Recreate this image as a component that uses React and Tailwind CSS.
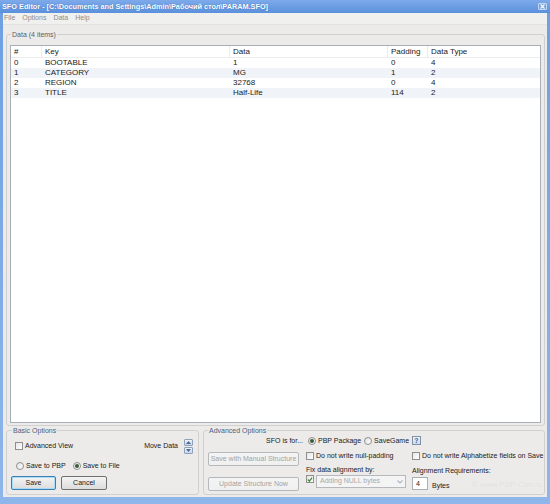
import React from 'react';

const rows = [
  { n: '0', key: 'BOOTABLE', data: '1', pad: '0', type: '4' },
  { n: '1', key: 'CATEGORY', data: 'MG', pad: '1', type: '2' },
  { n: '2', key: 'REGION', data: '32768', pad: '0', type: '4' },
  { n: '3', key: 'TITLE', data: 'Half-Life', pad: '114', type: '2' },
];

function CheckBox({ checked, label }) {
  return (
    <div className="flex items-center gap-[2px] h-[8px]">
      <span className="w-[8px] h-[8px] border border-[#8e8f8f] bg-gradient-to-br from-[#e6e6e6] to-white flex items-center justify-center">
        {checked && (
          <svg width="7" height="7" viewBox="0 0 7 7">
            <polyline points="1,3.5 2.8,5.5 6,1.2" fill="none" stroke="#3c8c2c" strokeWidth="1.4" />
          </svg>
        )}
      </span>
      {label && <span className="leading-[8px] whitespace-nowrap">{label}</span>}
    </div>
  );
}

function Radio({ checked, label }) {
  return (
    <div className="flex items-center gap-[2px]">
      <span className="w-[8px] h-[8px] rounded-full border border-[#8e8f8f] bg-gradient-to-br from-[#e2e2e2] to-white flex items-center justify-center">
        {checked && <span className="w-[4px] h-[4px] rounded-full bg-[#3b5a3b]" />}
      </span>
      <span className="leading-[8px] whitespace-nowrap">{label}</span>
    </div>
  );
}

function Button({ children, w, def, disabled }) {
  return (
    <div
      className={
        'h-[14px] rounded-[2px] border flex items-center justify-center bg-gradient-to-b from-[#f4f4f4] to-[#dcdcdc] whitespace-nowrap ' +
        (disabled
          ? 'border-[#b5b9bc] text-[#a3a3a3] from-[#f3f3f3] to-[#f0f0f0]'
          : def
          ? 'border-[#3c7fb1] shadow-[inset_0_0_0_1px_#a8dcf7]'
          : 'border-[#707070]')
      }
      style={{ width: w }}
    >
      {children}
    </div>
  );
}

export default function App() {
  return (
    <div className="w-[550px] h-[504px] flex flex-col bg-gradient-to-b from-[#6d9fe2] to-[#8fb6ea] font-['Liberation_Sans',Arial,sans-serif] text-[#1a1a1a] overflow-hidden">
      {/* title bar */}
      <div className="h-[13px] flex items-center pl-[2px] pr-[3px] bg-gradient-to-b from-[#7eaaea] to-[#5a90dc]">
        <span className="text-[7.3px] font-bold text-white leading-[13px] whitespace-nowrap [text-shadow:0_0_1px_#2b5da8]">
          {'SFO Editor - [C:\\Documents and Settings\\Admin\\Рабочий стол\\PARAM.SFO]'}
        </span>
        <span className="ml-auto w-[9px] h-[7px] rounded-[1px] border border-[#c5d9f3] bg-[#6f9fe0] flex items-center justify-center">
          <svg width="5" height="5" viewBox="0 0 5 5">
            <path d="M0.5 0.5 L4.5 4.5 M4.5 0.5 L0.5 4.5" stroke="white" strokeWidth="1.1" />
          </svg>
        </span>
      </div>

      <div className="flex-1 mx-[3px] mb-[7px] bg-[#ecebea] flex flex-col">
        {/* menu */}
        <div className="h-[12px] flex items-center gap-[7px] px-[1px] text-[7px] text-[#8d8d8d] bg-[#f0f0ef] border-b border-[#e2e2e2]">
          <span>File</span>
          <span>Options</span>
          <span>Data</span>
          <span>Help</span>
        </div>

        <div className="flex-1 flex flex-col pl-[3px] pr-[2px]">
          {/* data group */}
          <fieldset className="mt-[5px] flex-1 flex flex-col border border-[#d0d0d0] rounded-[3px] px-[3px] pb-[2px]">
            <legend className="ml-[1px] px-[1px] text-[7px] leading-[9px] text-[#5a5f68]">Data (4 items)</legend>
            <div className="mt-[6px] flex-1 bg-white border border-[#a9afb6] text-[8px]">
              <div className="grid grid-cols-[31px_188px_158px_40px_1fr] h-[12px] border-b border-[#ececec]">
                {['#', 'Key', 'Data', 'Padding', 'Data Type'].map((h, i) => (
                  <div key={h} className={'pl-[3px] leading-[12px] ' + (i < 4 ? 'border-r border-[#ececec]' : '')}>
                    {h}
                  </div>
                ))}
              </div>
              {rows.map((r, i) => (
                <div
                  key={r.n}
                  className={'grid grid-cols-[31px_188px_158px_40px_1fr] h-[10px] leading-[10px] ' + (i % 2 ? 'bg-[#f0f3f8]' : '')}
                >
                  <div className="pl-[3px]">{r.n}</div>
                  <div className="pl-[3px]">{r.key}</div>
                  <div className="pl-[3px]">{r.data}</div>
                  <div className="pl-[3px]">{r.pad}</div>
                  <div className="pl-[3px]">{r.type}</div>
                </div>
              ))}
            </div>
          </fieldset>

          {/* options */}
          <div className="h-[71px] flex gap-[4px] pb-[2px] text-[7px]">
            <fieldset className="w-[193px] border border-[#d0d0d0] rounded-[3px] pl-[4px] flex flex-col">
              <legend className="ml-[1px] px-[1px] leading-[9px] text-[#4e5d7a]">Basic Options</legend>
              <div className="mt-[3px] h-[16px] flex items-center pl-[4px] pr-[5px]">
                <CheckBox label="Advanced View" />
                <span className="ml-auto mr-[6px]">Move Data</span>
                <div className="flex flex-col gap-[1px]">
                  {[0, 1].map((k) => (
                    <span
                      key={k}
                      className="w-[9px] h-[7px] rounded-[1px] border border-[#8ea2bc] bg-gradient-to-b from-[#eef4fb] to-[#c6d6ea] flex items-center justify-center"
                    >
                      <svg width="5" height="3" viewBox="0 0 5 3">
                        <path d={k ? 'M0 0 L5 0 L2.5 3 Z' : 'M0 3 L5 3 L2.5 0 Z'} fill="#4d6a8e" />
                      </svg>
                    </span>
                  ))}
                </div>
              </div>
              <div className="mt-[7px] h-[10px] flex items-center gap-[7px] pl-[5px]">
                <Radio label="Save to PBP" />
                <Radio checked label="Save to File" />
              </div>
              <div className="mt-[5px] flex gap-[5px]">
                <Button w="45px" def>
                  Save
                </Button>
                <Button w="46px">Cancel</Button>
              </div>
            </fieldset>

            <fieldset className="relative flex-1 border border-[#d0d0d0] rounded-[3px] pl-[4px] flex">
              <legend className="ml-[0px] px-[1px] leading-[9px] text-[#4e5d7a]">Advanced Options</legend>
              <div className="w-[95px] flex flex-col">
                <div className="h-[11px] leading-[11px] text-right whitespace-nowrap">SFO is for...</div>
                <div className="mt-[6px]">
                  <Button w="91px" disabled>
                    Save with Manual Structure
                  </Button>
                </div>
                <div className="mt-[11px]">
                  <Button w="91px" disabled>
                    Update Structure Now
                  </Button>
                </div>
              </div>

              <div className="ml-[3px] w-[103px] flex flex-col">
                <div className="h-[11px] flex items-center gap-[3px] pl-[2px]">
                  <Radio checked label="PBP Package" />
                  <Radio label="SaveGame" />
                </div>
                <div className="mt-[6px]">
                  <CheckBox label="Do not write null-padding" />
                </div>
                <div className="mt-[6px] h-[8px] leading-[8px] whitespace-nowrap">Fix data alignment by:</div>
                <div className="mt-[1px] flex items-start gap-[2px]">
                  <CheckBox checked />
                  <div className="w-[90px] h-[13px] border border-[#b5b9bc] bg-[#f4f4f4] flex items-center pl-[3px] pr-[2px] text-[#a9a9a9]">
                    <span className="whitespace-nowrap">Adding NULL bytes</span>
                    <svg className="ml-auto" width="6" height="4" viewBox="0 0 6 4">
                      <path d="M0.5 0.5 L3 3 L5.5 0.5" fill="none" stroke="#a9b7c9" strokeWidth="1.2" />
                    </svg>
                  </div>
                </div>
              </div>

              <div className="ml-[3px] flex-1 flex flex-col">
                <div className="h-[11px] flex items-center">
                  <span className="w-[9px] h-[9px] border border-[#7f8fa8] bg-gradient-to-b from-[#f1f5fb] to-[#cfdcec] flex items-center justify-center text-[7px] font-bold text-[#3d5b8a] leading-none">
                    ?
                  </span>
                </div>
                <div className="mt-[6px]">
                  <CheckBox label="Do not write Alphabetize fields on Save" />
                </div>
                <div className="mt-[7px] h-[8px] leading-[8px] whitespace-nowrap">Alignment Requirements:</div>
                <div className="mt-[2px] flex items-end gap-[4px]">
                  <div className="w-[16px] h-[13px] bg-white border border-[#a9afb6] pl-[3px] leading-[11px]">4</div>
                  <span className="leading-[9px]">Bytes</span>
                </div>
              </div>

              <span className="absolute right-[2px] bottom-[3px] text-[8px] text-[#e2e2e2] whitespace-nowrap">© www.PSP-Con.ru</span>
            </fieldset>
          </div>
        </div>
      </div>
    </div>
  );
}
